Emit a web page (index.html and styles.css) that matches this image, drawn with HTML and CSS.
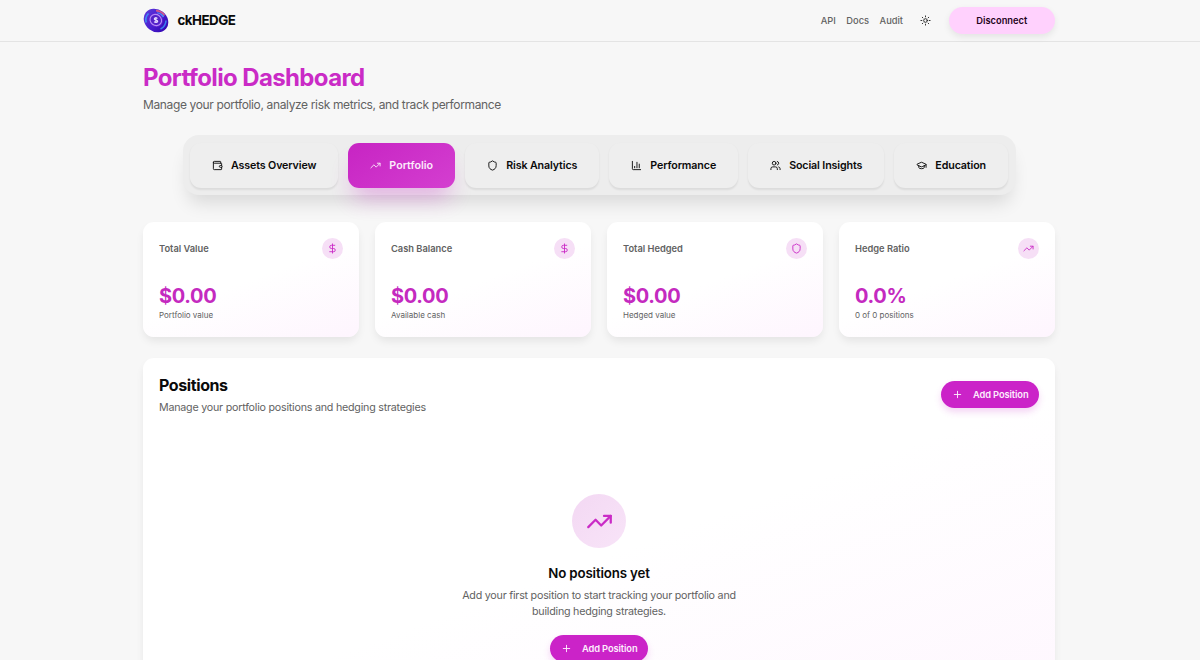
FILE: index.html
```html
<!DOCTYPE html>
<html lang="en">
<head>
  <meta charset="UTF-8" />
  <meta name="viewport" content="width=device-width, initial-scale=1.0" />
  <title>ckHEDGE</title>
  <link rel="stylesheet" href="styles.css">
</head>
<body>
  <!-- Shared icons -->
  <svg class="sprite" xmlns="http://www.w3.org/2000/svg">
    <symbol id="trend" viewBox="0 0 24 24"><path d="M22 7 13.5 15.5 8.5 10.5 2 17"/><path d="M16 7h6v6"/></symbol>
    <symbol id="shield" viewBox="0 0 24 24"><path d="M20 13c0 5-3.5 7.5-7.66 8.95a1 1 0 0 1-.67-.01C7.5 20.5 4 18 4 13V6a1 1 0 0 1 1-1c2 0 4.5-1.2 6.24-2.72a1.17 1.17 0 0 1 1.52 0C14.51 3.81 17 5 19 5a1 1 0 0 1 1 1z"/></symbol>
    <symbol id="dollar" viewBox="0 0 24 24"><path d="M12 2v20"/><path d="M17 5H9.5a3.5 3.5 0 0 0 0 7h5a3.5 3.5 0 0 1 0 7H6"/></symbol>
    <symbol id="plus" viewBox="0 0 24 24"><path d="M5 12h14M12 5v14"/></symbol>
  </svg>

  <header class="header">
    <div class="header-inner">
      <a class="brand">
        <svg class="logo" viewBox="0 0 26 25">
          <defs>
            <linearGradient id="coin" x1="0" y1="0" x2="1" y2="0">
              <stop offset="0" stop-color="#5a35d8"/>
              <stop offset="0.5" stop-color="#4a1fd0"/>
              <stop offset="1" stop-color="#3508b4"/>
            </linearGradient>
          </defs>
          <ellipse cx="13" cy="12.5" rx="13" ry="11" transform="rotate(38 13 12.5)" fill="url(#coin)"/>
          <g fill="none" stroke-width="1.6">
            <path d="M3.200 14.500A10 9.500 0 0 1 5.500 5.500" stroke="#3f8af5"/>
            <path d="M13 2.600A10.500 10 0 0 1 21.500 7.500" stroke="#d2588c"/>
            <path d="M14 5A8.500 8.500 0 0 1 20.500 9" stroke="#4a8cf5"/>
            <path d="M23 12.500A10 10 0 0 1 17.500 21" stroke="#3b7cf0"/>
          </g>
          <ellipse cx="12.800" cy="12" rx="7.400" ry="6.900" transform="rotate(38 12.800 12)" fill="#5e20d4"/>
          <ellipse cx="12.800" cy="12" rx="6" ry="5.400" transform="rotate(38 12.800 12)" fill="#5420c8" stroke="#b48cf5" stroke-width="1.100"/>
          <path d="M14.500 10.500c-.8-1-3.200-.9-3.200.4 0 1.500 3.400.9 3.400 2.400 0 1.300-2.700 1.400-3.600.4M12.900 9v6" fill="none" stroke="#e4d8ff" stroke-width="1.200"/>
        </svg>
        <span class="brand-name">ckHEDGE</span>
      </a>
      <nav class="nav">
        <a>API</a>
        <a>Docs</a>
        <a>Audit</a>
        <svg class="icon sun" viewBox="0 0 24 24"><circle cx="12" cy="12" r="4"/><path d="M12 2v2M12 20v2M4.930 4.930l1.410 1.410M17.660 17.660l1.410 1.410M2 12h2M20 12h2M6.340 17.660l-1.410 1.410M19.070 4.930l-1.410 1.410"/></svg>
        <button class="btn-disconnect">Disconnect</button>
      </nav>
    </div>
  </header>

  <main class="container">
    <h1>Portfolio Dashboard</h1>
    <p class="lead">Manage your portfolio, analyze risk metrics, and track performance</p>

    <div class="tabs">
      <button class="tab">
        <svg class="icon" viewBox="0 0 24 24"><path d="M19 7V4a1 1 0 0 0-1-1H5a2 2 0 0 0 0 4h15a1 1 0 0 1 1 1v4h-3a2 2 0 0 0 0 4h3a1 1 0 0 0 1-1v-2a1 1 0 0 0-1-1"/><path d="M3 5v14a2 2 0 0 0 2 2h15a1 1 0 0 0 1-1v-4"/></svg>
        <span>Assets Overview</span>
      </button>
      <button class="tab active">
        <svg class="icon"><use href="#trend"/></svg>
        <span>Portfolio</span>
      </button>
      <button class="tab">
        <svg class="icon"><use href="#shield"/></svg>
        <span>Risk Analytics</span>
      </button>
      <button class="tab">
        <svg class="icon" viewBox="0 0 24 24"><path d="M3 3v16a2 2 0 0 0 2 2h16M18 17V9M13 17V5M8 17v-3"/></svg>
        <span>Performance</span>
      </button>
      <button class="tab">
        <svg class="icon" viewBox="0 0 24 24"><path d="M16 21v-2a4 4 0 0 0-4-4H6a4 4 0 0 0-4 4v2"/><circle cx="9" cy="7" r="4"/><path d="M22 21v-2a4 4 0 0 0-3-3.870M16 3.130a4 4 0 0 1 0 7.750"/></svg>
        <span>Social Insights</span>
      </button>
      <button class="tab">
        <svg class="icon" viewBox="0 0 24 24"><path d="M21.420 10.920a1 1 0 0 0-.02-1.840L12.830 5.180a2 2 0 0 0-1.660 0L2.600 9.080a1 1 0 0 0 0 1.830l8.570 3.910a2 2 0 0 0 1.660 0z"/><path d="M22 10v6M6 12.500V16a6 3 0 0 0 12 0v-3.500"/></svg>
        <span>Education</span>
      </button>
    </div>

    <section class="stats">
      <div class="card stat">
        <div class="stat-head"><span>Total Value</span><div class="badge"><svg class="icon"><use href="#dollar"/></svg></div></div>
        <div class="value">$0.00</div>
        <p class="note">Portfolio value</p>
      </div>
      <div class="card stat">
        <div class="stat-head"><span>Cash Balance</span><div class="badge"><svg class="icon"><use href="#dollar"/></svg></div></div>
        <div class="value">$0.00</div>
        <p class="note">Available cash</p>
      </div>
      <div class="card stat">
        <div class="stat-head"><span>Total Hedged</span><div class="badge"><svg class="icon"><use href="#shield"/></svg></div></div>
        <div class="value">$0.00</div>
        <p class="note">Hedged value</p>
      </div>
      <div class="card stat">
        <div class="stat-head"><span>Hedge Ratio</span><div class="badge"><svg class="icon"><use href="#trend"/></svg></div></div>
        <div class="value">0.0%</div>
        <p class="note">0 of 0 positions</p>
      </div>
    </section>

    <section class="card positions">
      <div class="positions-head">
        <div>
          <h2>Positions</h2>
          <p class="sub">Manage your portfolio positions and hedging strategies</p>
        </div>
        <button class="btn-add"><svg class="icon"><use href="#plus"/></svg><span>Add Position</span></button>
      </div>
      <div class="empty">
        <div class="empty-icon"><svg class="icon"><use href="#trend"/></svg></div>
        <h3>No positions yet</h3>
        <p class="sub">Add your first position to start tracking your portfolio and<br>building hedging strategies.</p>
        <button class="btn-add"><svg class="icon"><use href="#plus"/></svg><span>Add Position</span></button>
      </div>
    </section>
  </main>
</body>
</html>
```
FILE: styles.css
```css
* {
  box-sizing: border-box;
}
body {
  margin: 0;
  height: 660px;
  overflow: hidden;
  background: #f7f7f7;
  color: #0a0a0a;
  font-family: Inter, "Liberation Sans", sans-serif;
}
h1, h2, h3, p {
  margin: 0;
}
button {
  border: none;
  font-family: inherit;
  cursor: pointer;
}
.sprite {
  display: none;
}
.icon {
  width: 11px;
  height: 11px;
  flex: none;
  fill: none;
  stroke: currentColor;
  stroke-width: 2;
  stroke-linecap: round;
  stroke-linejoin: round;
}

/* Header */
.header {
  height: 42px;
  border-bottom: 1px solid #e4e4e4;
}
.header-inner {
  width: 912px;
  height: 41px;
  margin-left: 143px;
  display: flex;
  align-items: center;
  justify-content: space-between;
}
.brand {
  display: flex;
  align-items: center;
  gap: 8.5px;
}
.logo {
  width: 26px;
  height: 25px;
}
.brand-name {
  font-size: 13.3px;
  line-height: 16px;
  padding-bottom: 1px;
  font-weight: 700;
  letter-spacing: -0.5px;
}
.nav {
  display: flex;
  align-items: center;
  font-size: 9.3px;
  font-weight: 500;
  color: #626262;
}
.nav a {
  margin-right: 10.5px;
}
.sun {
  margin: 0 17.5px 0 6.5px;
  color: #222;
}
.btn-disconnect {
  width: 106.5px;
  height: 27px;
  padding: 0 0 1px;
  border-radius: 14px;
  background: #ffd1fd;
  color: #1f0420;
  font-size: 9.3px;
  font-weight: 600;
  box-shadow: 0 3px 7px rgba(0,0,0,0.08);
}

.container {
  width: 912px;
  margin-left: 143px;
}
h1 {
  padding-top: 20px;
  font-size: 24px;
  line-height: 32px;
  font-weight: 700;
  letter-spacing: -0.63px;
  color: #ca2bc6;
}
.lead {
  margin-top: 2px;
  font-size: 12px;
  line-height: 18px;
  letter-spacing: -0.36px;
  color: #626262;
}

/* Tabs */
.tabs {
  width: 833px;
  height: 60px;
  margin: 21px 0 0 39.5px;
  padding: 7.5px;
  display: flex;
  justify-content: space-between;
  background: #ededed;
  border-radius: 16px;
  box-shadow: 0 13px 18px -5px rgba(0,0,0,0.12);
}
.tab {
  height: 45px;
  padding: 0 22px;
  display: flex;
  align-items: center;
  gap: 8px;
  border-radius: 11px;
  background: #eee;
  color: #0a0a0a;
  font-size: 10.7px;
  font-weight: 600;
  letter-spacing: -0.13px;
  box-shadow: 0 1.5px 2px rgba(0,0,0,0.08);
}
.tab.active {
  background: linear-gradient(145deg, #c724c3, #d43fd0);
  color: #fceafb;
  letter-spacing: 0;
  box-shadow: 0 16px 22px -6px rgba(202,43,198,0.3);
}

/* Cards */
.card {
  border-radius: 11px;
  background: linear-gradient(160deg, #fff 50%, #fef5fe);
  box-shadow: 0 5px 9px -1px rgba(0,0,0,0.08);
}
.stats {
  margin-top: 27px;
  display: grid;
  grid-template-columns: repeat(4, 216px);
  gap: 16px;
}
.stat {
  height: 114.5px;
  padding: 16px;
}
.stat-head {
  height: 21px;
  display: flex;
  align-items: center;
  justify-content: space-between;
  font-size: 9.3px;
  font-weight: 600;
  color: #626262;
}
.badge {
  width: 21.5px;
  height: 21.5px;
  border-radius: 50%;
  display: flex;
  align-items: center;
  justify-content: center;
  background: #f6dff6;
  color: #ca2bc6;
}
.value {
  margin-top: 24px;
  font-size: 20px;
  line-height: 27px;
  font-weight: 700;
  letter-spacing: -0.35px;
  color: #c42abf;
}
.note {
  margin-top: 0;
  font-size: 8px;
  line-height: 11px;
  color: #626262;
}

/* Positions */
.positions {
  height: 400px;
  margin-top: 21.5px;
  padding: 16px;
}
.positions-head {
  display: flex;
  justify-content: space-between;
}
h2 {
  font-size: 16px;
  line-height: 22px;
  font-weight: 700;
  letter-spacing: -0.4px;
}
.sub {
  font-size: 10.7px;
  line-height: 16px;
  letter-spacing: -0.22px;
  color: #626262;
}
.positions-head .sub {
  margin-top: 4px;
}
.btn-add {
  width: 98px;
  height: 27px;
  padding: 0 10.5px;
  display: flex;
  align-items: center;
  justify-content: space-between;
  border-radius: 14px;
  background: #cb23c8;
  color: #fdeefd;
  font-size: 9.3px;
  font-weight: 600;
  letter-spacing: -0.1px;
  box-shadow: 0 4px 7px rgba(202,43,198,0.2);
}
.positions-head .btn-add {
  margin-top: 7px;
}
.empty {
  padding-top: 78px;
  display: flex;
  flex-direction: column;
  align-items: center;
  text-align: center;
}
.empty-icon {
  width: 54px;
  height: 54px;
  border-radius: 50%;
  display: flex;
  align-items: center;
  justify-content: center;
  background: linear-gradient(135deg, #f3d8f3, #f8e4f8);
  color: #ca2bc6;
}
.empty-icon .icon {
  width: 27px;
  height: 27px;
}
h3 {
  margin-top: 16px;
  font-size: 13.3px;
  line-height: 19px;
  font-weight: 600;
  letter-spacing: -0.15px;
}
.empty .sub {
  margin-top: 5px;
}
.empty .btn-add {
  margin-top: 15px;
}
```
